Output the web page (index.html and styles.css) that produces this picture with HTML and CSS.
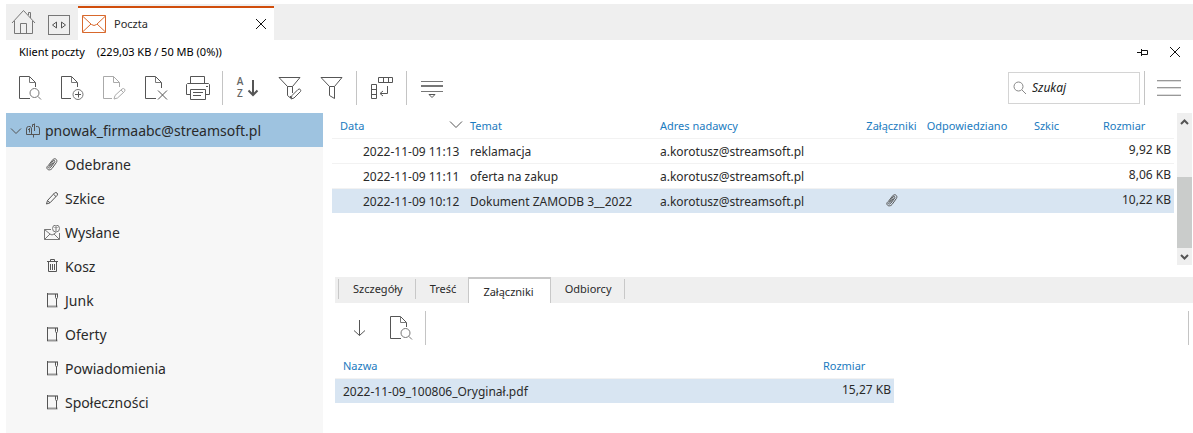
FILE: index.html
```html
<!DOCTYPE html>
<html lang="pl">
<head>
<meta charset="utf-8">
<meta name="viewport" content="width=device-width, initial-scale=1">
<title>Poczta</title>
<link rel="stylesheet" href="styles.css">
</head>
<body>
<svg class="defs" aria-hidden="true">
  <symbol id="i-doc-search" viewBox="0 0 24 26"><path d="M12 24.500H1.500V2.500H11.500L17.500 8.500V13"/><path class="mid" d="M11.500 2.500V8.500H17.500"/><circle class="mid" cx="16.500" cy="19" r="4.500"/><path class="mid" d="M19.800 22.300L23 25.500"/></symbol>
  <symbol id="i-clip" viewBox="0 0 16 16"><path d="M5.500 8.500L9 4C10.200 2.700 11.500 3.800 10.600 5.200L7 10C5.300 12.200 3 10.500 4.300 8.500L8.500 3C10.500 .2 14.300 2.600 12.300 5.600L8 11.500C6.300 13.800 2 13.200 3 9.500"/><path d="M5.500 8.500Q5.300 10 6.500 9L9.500 5.500"/></symbol>
  <symbol id="i-folder" viewBox="0 0 16 16"><path class="fold" d="M3 1H14M3 13.500H13.500"/><path d="M3.500 0V14M12.500 6V14M11.500 1V4.500L12.500 6L13.500 4.500V1"/></symbol>
  <symbol id="i-pencil" viewBox="0 0 16 16"><path d="M2.500 13L3.500 9.500L10.500 2Q12 1 13 2T13.200 4.300L6 11.800ZM9.500 3.200L12 5.600M3.500 9.500L6 11.800"/></symbol>
</svg>

<header class="strip">
  <button class="strip-btn" aria-label="Start"><svg class="ico home" viewBox="0 0 26 26"><path class="mid" d="M1 14L12.500 1.500L24 14M3.500 12V24.500H21.500V12M9.500 24.500V14.500H15.500V24.500M17.500 6V3.500H19.500V9"/></svg></button>
  <button class="strip-btn" aria-label="Okna"><svg class="ico panes" viewBox="0 0 22 20"><rect class="mid" x=".5" y=".5" width="21" height="19"/><path d="M8.500 7V13L4.500 10ZM13.500 7V13L17.500 10Z"/></svg></button>
  <div class="app-tab">
    <svg class="ico mail" viewBox="0 0 24 18"><path d="M.5 .5H23.500V17.500H.5ZM.5 1L9.500 9.500Q12 11.500 14.500 9.500L23.500 1M.5 17L9 9M23.500 17L15 9"/></svg>
    <span class="app-tab-name">Poczta</span>
    <button class="close" aria-label="Zamknij kartę"><svg class="ico cross" viewBox="0 0 12 12"><path d="M1 1L11 11M11 1L1 11"/></svg></button>
  </div>
</header>

<div class="title-row">
  <h1 class="title">Klient poczty</h1><span>(229,03 KB / 50 MB (0%))</span>
  <div class="title-tools">
    <button class="close" aria-label="Przypnij"><svg class="ico pin" viewBox="0 0 12 8"><path d="M0 4.500H4M4.500 1V8M4.500 2.500H10.500V6.500H4.500"/></svg></button>
    <button class="close" aria-label="Zamknij"><svg class="ico cross" viewBox="0 0 12 12"><path d="M1 1L11 11M11 1L1 11"/></svg></button>
  </div>
</div>

<div class="toolbar">
  <button class="tool" aria-label="Podgląd"><svg class="ico"><use href="#i-doc-search"/></svg></button>
  <button class="tool" aria-label="Nowa"><svg class="ico" viewBox="0 0 24 26"><path d="M11 24.500H1.500V2.500H11.500L17.500 8.500V13"/><path class="mid" d="M11.500 2.500V8.500H17.500"/><circle class="mid" cx="18" cy="20.500" r="5"/><path d="M15 20.500H21M18.500 17.500V23.500"/></svg></button>
  <button class="tool" aria-label="Edytuj" disabled><svg class="ico" viewBox="0 0 24 26"><path d="M10 24.500H1.500V2.500H11.500L17.500 8.500V13M11.500 2.500V8.500H17.500"/><path d="M12 25L13 21.500L20 15Q21.500 14 22.500 15T22.500 17.500L15.500 24ZM19 16L21.500 18.500"/></svg></button>
  <button class="tool" aria-label="Usuń"><svg class="ico" viewBox="0 0 24 26"><path d="M12 24.500H1.500V2.500H11.500L17.500 8.500V14"/><path class="mid" d="M11.500 2.500V8.500H17.500"/><path d="M14 16.500L23 25.500M23 16.500L14 25.500"/></svg></button>
  <button class="tool" aria-label="Drukuj"><svg class="ico" viewBox="0 0 24 26"><path d="M4.500 9.500V2.500H18.500V9.500M4 20.500H.5V10.500L1.500 9.500H22.500L23.500 10.500V20.500H19.500M4.500 15.500H19.500V25.500H4.500ZM7 18.500H17M7 21.500H15M20 12.500H22"/></svg></button>
  <span class="sep"></span>
  <button class="tool sort" aria-label="Sortuj"><span class="az"><span>A</span><span>Z</span></span><svg class="ico arrow" viewBox="0 0 12 20"><path class="bold" d="M6 3V18M1.500 13.500L6 18L10.500 13.500"/></svg></button>
  <button class="tool" aria-label="Edytuj filtr"><svg class="ico" viewBox="0 0 24 26"><path d="M14.500 19V12.500L22 3.500H1L9.500 12.500V21.500L12.500 24V22M9.500 12.500H14.500"/><path d="M13 25L14 21.500L20 15.500Q21.500 14.500 22.300 15.500T22.500 17.500L16 24Z"/></svg></button>
  <button class="tool" aria-label="Filtr"><svg class="ico" viewBox="0 0 24 26"><path d="M1 3.500H22L14.500 12.500V24.500L9.500 21.500V12.500ZM9.500 12.500H14.500"/></svg></button>
  <span class="sep"></span>
  <button class="tool" aria-label="Kolumny"><svg class="ico" viewBox="0 0 24 26"><path d="M8.500 3.500H22.500V8.500H8.500ZM13.500 3.500V8.500M18.500 3.500V8.500M1.500 10.500H6.500V24.500H1.500ZM1.500 15.500H6.500M1.500 20.500H6.500M17.500 12V19.500H10.500M13 17L10 19.500L13 22"/></svg></button>
  <span class="sep"></span>
  <button class="tool" aria-label="Więcej"><svg class="ico" viewBox="0 0 24 26"><path class="mid" d="M1 7.500H23M1 17.500H23"/><path class="mid bold" d="M1 12H23"/><path d="M9 20.500H15L12 23.500Z"/></svg></button>
  <label class="search"><svg class="ico lens" viewBox="0 0 14 14"><circle cx="5.500" cy="5.500" r="4.500"/><path d="M9 9L13 13"/></svg><input type="search" placeholder="Szukaj" aria-label="Szukaj"></label>
  <span class="sep"></span>
  <button class="menu" aria-label="Menu"><svg class="ico" viewBox="0 0 24 26"><path d="M0 5.500H24M0 12.500H24M0 20.500H24"/><path class="faint" d="M0 13.500H24M0 6.500H24M0 19.500H24"/></svg></button>
</div>

<div class="work">
  <nav class="tree">
    <a class="account" href="#"><svg class="ico chev" viewBox="0 0 12 8"><path d="M1 1.500L6 6.500L11 1.500"/></svg><svg class="ico small" viewBox="0 0 16 16"><path d="M5 3.500H3.500Q1.500 3.500 1.500 6V11.500H14.500V6Q14.500 3.500 12.500 3.500H11M5 3.500Q6.500 4 6.500 6V11.500M3 6.500H5M4.500 5V9.500M9.500 .5V8M9.500 1.500H7.500V4M8.500 12V14.500"/></svg>pnowak_firmaabc@streamsoft.pl</a>
    <a class="folder" href="#"><svg class="ico small"><use href="#i-clip"/></svg>Odebrane</a>
    <a class="folder" href="#"><svg class="ico small"><use href="#i-pencil"/></svg>Szkice</a>
    <a class="folder" href="#"><svg class="ico small" viewBox="0 0 16 16"><path class="mid" d="M7 4.500H.5V14.500H15.500V8M.5 4.500L6 9Q8 11 10 9L12 7.500M.5 14.500L6 9M15.500 14.500L10 9"/><circle class="mid" cx="12" cy="3.500" r="3.500"/><path class="mid" d="M12 6V2M10.500 3L12 1.500L13.500 3"/></svg>Wysłane</a>
    <a class="folder" href="#"><svg class="ico small" viewBox="0 0 16 16"><path d="M4.500 3V12.500H12.500V3M3 2.500H14M6.500 2V.5H10.500V2M6.500 5V11M8.500 5V11M10.500 5V11"/></svg>Kosz</a>
    <a class="folder" href="#"><svg class="ico small"><use href="#i-folder"/></svg>Junk</a>
    <a class="folder" href="#"><svg class="ico small"><use href="#i-folder"/></svg>Oferty</a>
    <a class="folder" href="#"><svg class="ico small"><use href="#i-folder"/></svg>Powiadomienia</a>
    <a class="folder" href="#"><svg class="ico small"><use href="#i-folder"/></svg>Społeczności</a>
  </nav>

  <main class="content">
    <section class="list">
      <table class="grid mails">
        <colgroup><col class="c-date"><col><col class="c-from"><col class="c-att"><col class="c-ans"><col class="c-draft"><col class="c-size"></colgroup>
        <thead><tr>
          <th><span class="sorted">Data<svg class="ico chevron" viewBox="0 0 14 9"><path d="M1 1.500L7 7.500L13 1.500"/></svg></span></th>
          <th>Temat</th><th>Adres nadawcy</th><th class="mid-col">Załączniki</th><th class="mid-col">Odpowiedziano</th><th class="mid-col">Szkic</th><th class="size-head">Rozmiar</th>
        </tr></thead>
        <tbody>
          <tr><td class="date">2022-11-09 11:13</td><td>reklamacja</td><td>a.korotusz@streamsoft.pl</td><td></td><td></td><td></td><td class="num">9,92 KB</td></tr>
          <tr><td class="date">2022-11-09 11:11</td><td>oferta na zakup</td><td>a.korotusz@streamsoft.pl</td><td></td><td></td><td></td><td class="num">8,06 KB</td></tr>
          <tr class="on"><td class="date">2022-11-09 10:12</td><td>Dokument ZAMODB 3__2022</td><td>a.korotusz@streamsoft.pl</td><td class="mid-col"><svg class="ico small clip"><use href="#i-clip"/></svg></td><td></td><td></td><td class="num">10,22 KB</td></tr>
        </tbody>
      </table>
      <div class="scroll">
        <button class="scroll-btn" aria-label="W górę"><svg class="ico tip" viewBox="0 0 9 6"><path d="M1 5L4.500 1.500L8 5"/></svg></button>
        <div class="track"><div class="thumb"></div></div>
        <button class="scroll-btn" aria-label="W dół"><svg class="ico tip" viewBox="0 0 9 6"><path d="M1 1L4.500 4.500L8 1"/></svg></button>
      </div>
    </section>

    <section class="details">
      <div class="tabs" role="tablist">
        <button class="tab" role="tab">Szczegóły</button>
        <button class="tab" role="tab">Treść</button>
        <button class="tab current" role="tab" aria-selected="true">Załączniki</button>
        <button class="tab" role="tab">Odbiorcy</button>
      </div>
      <div class="toolbar sub">
        <button class="tool" aria-label="Pobierz"><svg class="ico" viewBox="0 0 24 26"><path d="M12.500 6V21.500M7 16.500L12.500 21.500L18 16.500"/></svg></button>
        <button class="tool" aria-label="Podgląd załącznika"><svg class="ico"><use href="#i-doc-search"/></svg></button>
        <span class="sep"></span>
        <span class="sep last"></span>
      </div>
      <table class="grid files">
        <colgroup><col><col class="c-file-size"></colgroup>
        <thead><tr><th>Nazwa</th><th class="file-size-head">Rozmiar</th></tr></thead>
        <tbody><tr class="on"><td>2022-11-09_100806_Oryginał.pdf</td><td class="num">15,27 KB</td></tr></tbody>
      </table>
    </section>
  </main>
</div>
</body>
</html>
```

FILE: styles.css
```css
* { box-sizing: border-box; }

body {
  margin: 0;
  padding: 4px 0 0 6px;
  min-height: 100vh;
  display: flex;
  flex-direction: column;
  background: #fff;
  color: #2a2a2a;
  font: 12px/16px "Noto Sans", "Open Sans", sans-serif;
}

button {
  border: 0;
  padding: 0;
  background: none;
  color: inherit;
  font: inherit;
}

a { color: inherit; text-decoration: none; }

.defs { display: none; }

.ico {
  width: 24px;
  height: 26px;
  flex: none;
  display: block;
  fill: none;
  stroke: #555;
}
.mid { stroke: #777; }
.faint { stroke: #ddd; }
.fold { stroke: #999; stroke-width: 2; }
.bold { stroke-width: 2; }

/* window strip */
.strip {
  height: 36px;
  display: flex;
  background: #efefef;
}
.strip-btn { width: 36px; display: grid; place-items: center; }
.strip-btn:first-child { width: 35px; }
.home { width: 26px; height: 26px; }
.panes { width: 22px; height: 20px; margin-top: 6px; }
.app-tab {
  width: 196px;
  margin: 2px 0 0 1px;
  padding: 0 7px 0 4px;
  display: flex;
  align-items: center;
  border-top: 2px solid #d04e0c;
  background: #fff;
}
.mail { width: 24px; height: 18px; stroke: #d8682c; }
.app-tab-name { flex: 1; padding-left: 8px; font-size: 11px; }
.close { display: block; }
.cross { width: 12px; height: 12px; stroke: #111; }
.pin { width: 12px; height: 8px; stroke: #111; }

.title-row {
  height: 23px;
  padding: 0 12px 0 13px;
  display: flex;
  align-items: center;
  gap: 12px;
  color: #000;
  font-size: 11px;
}
.title { margin: 0; font: inherit; }
.title-tools { margin-left: auto; display: flex; align-items: center; gap: 20px; }

/* toolbars */
.toolbar {
  height: 50px;
  padding: 0 12px 0 3px;
  display: flex;
  align-items: center;
}
.tool { width: 42px; height: 34px; padding-bottom: 2px; display: grid; place-items: center; }
.tool:disabled .ico, .tool:disabled .ico * { stroke: #aaa; }
.sep { width: 1px; height: 34px; margin: 0 4px 0 3px; background: #c4c4c4; }
.sort { display: flex; align-items: center; justify-content: center; gap: 4px; }
.az { display: grid; font: 600 10px/12px "Open Sans", sans-serif; color: #666; }
.arrow { width: 12px; height: 20px; }
.search {
  width: 132px;
  height: 32px;
  margin: 0 1px 0 auto;
  padding: 0 4px;
  display: flex;
  align-items: center;
  gap: 5px;
  border: 1px solid #d4d4d4;
}
.search input {
  width: 100%;
  min-width: 0;
  padding: 0;
  border: 0;
  outline: 0;
  background: none;
  font: italic 12px/16px "Noto Sans", "Open Sans", sans-serif;
}
.search input::placeholder { color: #222; opacity: 1; }
.lens { width: 14px; height: 14px; stroke: #888; }
.menu { margin-left: 8px; }
.menu .ico { stroke: #999; }

/* folder tree */
.work {
  flex: 1;
  display: grid;
  grid-template-columns: 317px minmax(0, 1fr);
}
.tree { background: #f7f7f7; font-size: 14px; line-height: 20px; }
.account, .folder { height: 34px; padding-top: 2px; display: flex; align-items: center; }
.account { padding-left: 4px; background: #9ec3e0; }
.folder { padding-left: 38px; gap: 5px; }
.small { width: 16px; height: 16px; }
.chev { width: 12px; height: 8px; margin-right: 3px; }
.account .small { margin-right: 4px; }

/* mail list */
.content { display: flex; flex-direction: column; gap: 12px; }
.list { min-height: 152px; padding: 0 1px 0 9px; display: flex; gap: 3px; align-items: stretch; }
.grid {
  border-collapse: collapse;
  table-layout: fixed;
  align-self: flex-start;
}
.mails { flex: 1; width: 100%; }
.grid th {
  height: 25px;
  padding: 2px 8px 0;
  text-align: left;
  font-size: 11px;
  font-weight: normal;
  color: #1b7bc0;
}
.grid td {
  height: 25px;
  padding: 2px 8px 0;
  border-top: 1px solid #f2f2f2;
  white-space: nowrap;
}
.grid .on td { background: #d8e5f2; }
.grid .date { padding: 2px 0 0 31px; }
.grid .num { padding: 0 3px 2px 0; text-align: right; }
.grid .mid-col { padding: 0; text-align: center; }
.grid th.mid-col { padding-top: 2px; }
.grid .size-head { padding: 2px 0 0 19px; }
.c-date { width: 130px; }
.c-from { width: 206px; }
.c-att { width: 67px; }
.c-ans { width: 84px; }
.c-draft { width: 75px; }
.c-size { width: 90px; }
.sorted { display: flex; justify-content: space-between; align-items: center; margin-right: -9px; }
.chevron { width: 14px; height: 9px; margin-bottom: 4px; }
.clip { margin: 0 auto; }

.scroll { width: 15px; display: flex; flex-direction: column; background: #efefef; }
.scroll-btn { height: 17px; display: grid; place-items: center; }
.track { flex: 1; display: flex; flex-direction: column; justify-content: flex-end; }
.thumb { height: 60%; background: #cacccb; }
.tip { width: 9px; height: 6px; stroke-width: 2; }

/* details */
.details { padding-left: 12px; }
.tabs {
  height: 26px;
  padding-left: 3px;
  display: flex;
  background: #efefef;
}
.tab {
  height: 20px;
  margin-top: 2px;
  padding: 0 12px 0 14px;
  border-left: 1px solid #c8c8c8;
  font-size: 11px;
  line-height: 20px;
}
.tab:last-child { border-left: 0; border-right: 1px solid #c8c8c8; }
.tab.current {
  height: 26px;
  margin: 0;
  padding: 2px 16px 0 14px;
  border: 1px solid #c8c8c8;
  border-width: 2px 1px 0;
  background: #fff;
}
.toolbar.sub { height: 50px; padding: 0 0 0 3px; }
.sep.last { margin-left: auto; }
.files { width: 559px; max-width: 100%; }
.c-file-size { width: 90px; }
.grid .file-size-head { padding: 2px 0 0 19px; }
```
